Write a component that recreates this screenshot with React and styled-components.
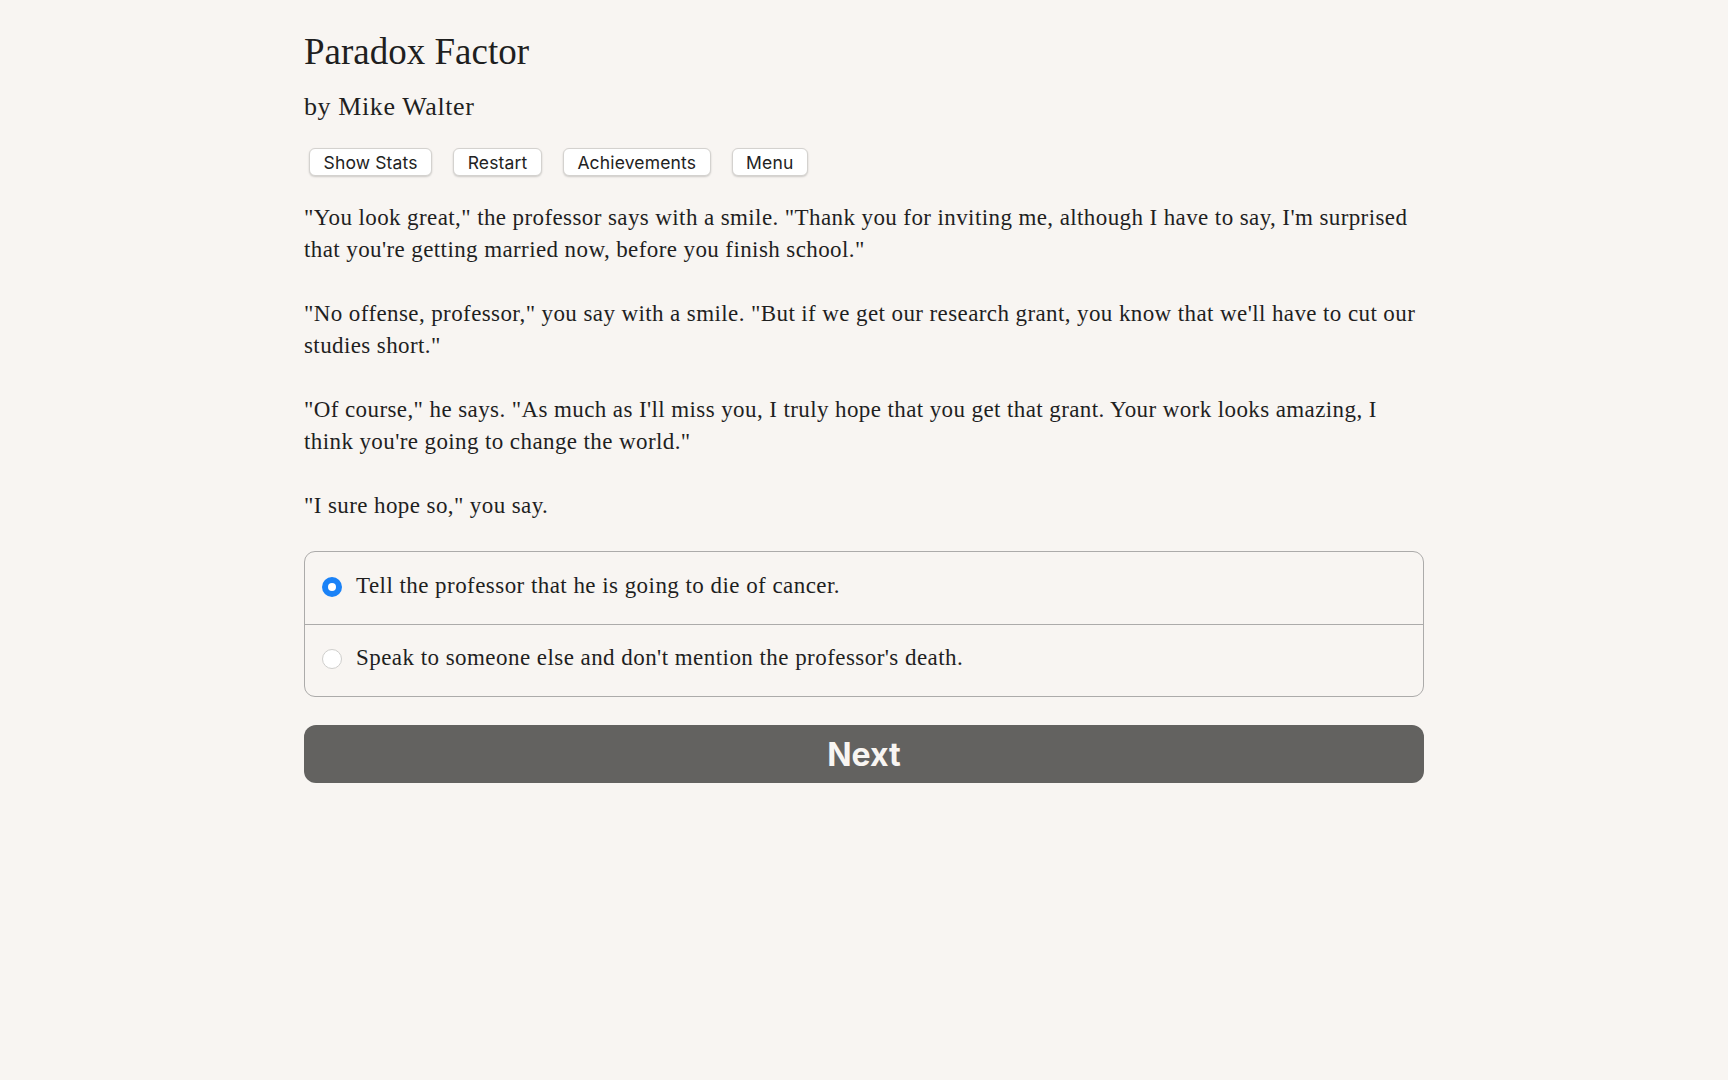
import styled, { createGlobalStyle } from "styled-components";
import * as React from "react";
import { useState } from "react";

const GlobalStyle = createGlobalStyle`
  html, body {
    margin: 0;
    padding: 0;
    background: #f8f5f2;
  }
  body {
    font-family: "Liberation Serif", "Times New Roman", serif;
    color: #1f1f1f;
  }
`;

const paragraphs = [
  `"You look great," the professor says with a smile. "Thank you for inviting me, although I have to say, I'm surprised that you're getting married now, before you finish school."`,
  `"No offense, professor," you say with a smile. "But if we get our research grant, you know that we'll have to cut our studies short."`,
  `"Of course," he says. "As much as I'll miss you, I truly hope that you get that grant. Your work looks amazing, I think you're going to change the world."`,
  `"I sure hope so," you say.`,
];

const choices = [
  "Tell the professor that he is going to die of cancer.",
  "Speak to someone else and don't mention the professor's death.",
];

const App = () => {
  const [picked, setPicked] = useState(0);
  return (
    <>
      <GlobalStyle />
      <Page>
        <Title>Paradox Factor</Title>
        <Byline>by Mike Walter</Byline>
        <Toolbar>
          <ToolButton>Show Stats</ToolButton>
          <ToolButton>Restart</ToolButton>
          <ToolButton>Achievements</ToolButton>
          <ToolButton>Menu</ToolButton>
        </Toolbar>
        <Story>
          {paragraphs.map((p, i) => (
            <p key={i}>{p}</p>
          ))}
        </Story>
        <ChoiceList>
          {choices.map((c, i) => (
            <ChoiceRow key={i} onClick={() => setPicked(i)}>
              <Radio $checked={picked === i} />
              <span>{c}</span>
            </ChoiceRow>
          ))}
        </ChoiceList>
        <NextButton>Next</NextButton>
      </Page>
    </>
  );
};

export default App;

const Page = styled.div`
  width: 1120px;
  margin: 0 auto;
  padding-top: 30px;
`;

const Title = styled.h1`
  margin: 0;
  font-weight: normal;
  font-size: 37px;
  line-height: 44px;
`;

const Byline = styled.h2`
  margin: 18px 0 0;
  font-weight: normal;
  font-size: 26px;
  line-height: 30px;
  letter-spacing: 0.6px;
`;

const Toolbar = styled.div`
  display: flex;
  gap: 21px;
  margin-top: 26px;
  padding-left: 5px;
`;

const ToolButton = styled.button`
  height: 28px;
  padding: 0 13.5px;
  background: #fff;
  border: 0.5px solid #d4d2cf;
  border-radius: 6px;
  box-shadow: 0 1px 2px rgba(0, 0, 0, 0.18);
  font-family: Inter, "Liberation Sans", sans-serif;
  font-size: 17.5px;
  letter-spacing: 0.15px;
  color: #222;
  cursor: pointer;
`;

const Story = styled.div`
  margin-top: 26px;
  font-size: 23px;
  line-height: 32px;
  letter-spacing: 0.4px;
  p {
    margin: 0 0 32px;
  }
  p:last-child {
    margin-bottom: 0;
  }
`;

const ChoiceList = styled.div`
  margin-top: 29px;
  border: 1.5px solid #acabaa;
  border-radius: 11px;
  overflow: hidden;
`;

const ChoiceRow = styled.label`
  display: flex;
  align-items: center;
  gap: 14px;
  box-sizing: border-box;
  height: 72px;
  padding: 0 17px 5px;
  font-size: 23px;
  letter-spacing: 0.45px;
  cursor: pointer;
  & + & {
    border-top: 1.5px solid #acabaa;
  }
`;

const Radio = styled.span`
  flex: none;
  box-sizing: border-box;
  width: 20px;
  height: 20px;
  margin-top: 2px;
  border-radius: 50%;
  background: ${(p) => (p.$checked ? "#1a82f7" : "#fff")};
  border: ${(p) => (p.$checked ? "none" : "1px solid #cfcecc")};
  display: flex;
  align-items: center;
  justify-content: center;
  &::after {
    content: "";
    display: ${(p) => (p.$checked ? "block" : "none")};
    width: 8px;
    height: 8px;
    border-radius: 50%;
    background: #fff;
  }
`;

const NextButton = styled.button`
  display: block;
  width: 100%;
  height: 58px;
  margin-top: 28px;
  border: none;
  border-radius: 12px;
  background: #636260;
  color: #f8f5f2;
  font-family: Inter, "Liberation Sans", sans-serif;
  font-weight: 700;
  font-size: 32px;
  cursor: pointer;
`;
